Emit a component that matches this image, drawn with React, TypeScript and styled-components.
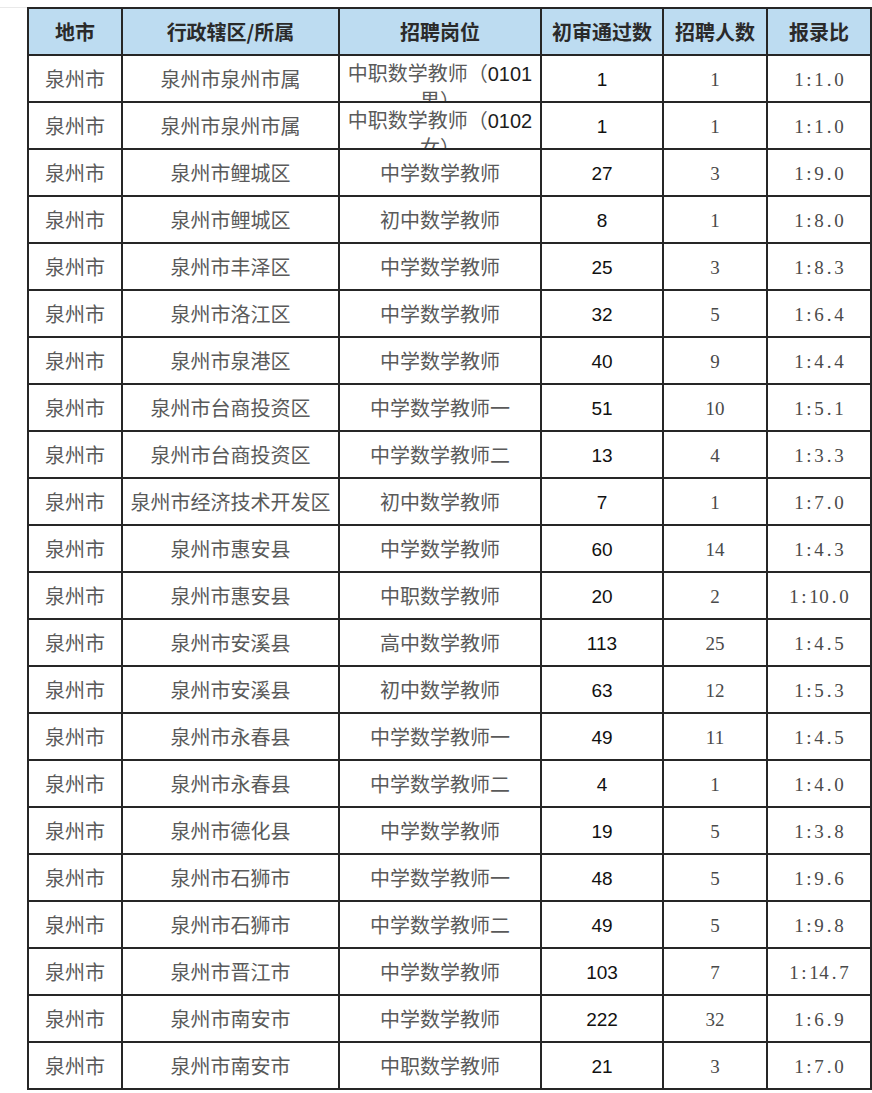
import React from "react";
import styled, { createGlobalStyle } from "styled-components";

const GlobalStyle = createGlobalStyle`
  html, body { margin: 0; padding: 0; background: #ffffff; }
  body { font-family: "Noto Sans CJK SC", "Liberation Sans", sans-serif; }
`;

const Page = styled.div`
  padding-top: 7px;
`;

const Frame = styled.div`
  border-top: 1px solid #e9e9e9;
  padding-left: 27px;
`;

const Table = styled.table`
  border-collapse: collapse;
  table-layout: fixed;
  width: 843px;
  margin-top: -1px;
`;

const HeadCell = styled.th`
  height: 47px;
  padding: 0;
  box-sizing: border-box;
  background: #bddcf1;
  border: 2px solid #262626;
  font-family: "Noto Sans CJK SC", sans-serif;
  font-weight: 700;
  font-size: 20px;
  color: #2a2a2a;
  text-align: center;
  vertical-align: middle;
  white-space: nowrap;
`;

const Cell = styled.td`
  height: 47px;
  padding: 0;
  box-sizing: border-box;
  border: 2px solid #262626;
  text-align: center;
  vertical-align: middle;
  background: #ffffff;
`;

const CjkText = styled.span`
  font-family: "Noto Sans CJK SC", sans-serif;
  font-size: 20px;
  color: #5a5a5a;
  white-space: nowrap;
`;

const WrapBox = styled.div`
  height: 45px;
  overflow: hidden;
  box-sizing: border-box;
  padding: 4px 6px 0;
  line-height: 26px;
  font-family: "Noto Sans CJK SC", sans-serif;
  font-size: 20px;
  color: #5a5a5a;
  text-align: center;
`;

const Code = styled.span`
  font-family: "Liberation Sans", sans-serif;
  color: #1c1c1c;
  font-size: 20px;
`;

const Passed = styled.span`
  font-family: "Liberation Sans", sans-serif;
  font-size: 19px;
  color: #111111;
`;

const Hired = styled.span`
  font-family: "Liberation Serif", serif;
  font-size: 19px;
  color: #4a4a4a;
`;

const Mono = styled.span`
  display: inline-flex;
  font-family: "Liberation Serif", serif;
  font-size: 19px;
  color: #4a4a4a;
`;

const MonoChar = styled.span`
  display: inline-block;
  width: 10px;
  text-align: center;
`;

type Row = {
  city: string;
  area: string;
  post: string;
  code?: string;
  tail?: string;
  passed: number;
  hired: number;
  ratio: string;
};

const rows: Row[] = [
  { city: "泉州市", area: "泉州市泉州市属", post: "中职数学教师（", code: "0101", tail: "男）", passed: 1, hired: 1, ratio: "1:1.0" },
  { city: "泉州市", area: "泉州市泉州市属", post: "中职数学教师（", code: "0102", tail: "女）", passed: 1, hired: 1, ratio: "1:1.0" },
  { city: "泉州市", area: "泉州市鲤城区", post: "中学数学教师", passed: 27, hired: 3, ratio: "1:9.0" },
  { city: "泉州市", area: "泉州市鲤城区", post: "初中数学教师", passed: 8, hired: 1, ratio: "1:8.0" },
  { city: "泉州市", area: "泉州市丰泽区", post: "中学数学教师", passed: 25, hired: 3, ratio: "1:8.3" },
  { city: "泉州市", area: "泉州市洛江区", post: "中学数学教师", passed: 32, hired: 5, ratio: "1:6.4" },
  { city: "泉州市", area: "泉州市泉港区", post: "中学数学教师", passed: 40, hired: 9, ratio: "1:4.4" },
  { city: "泉州市", area: "泉州市台商投资区", post: "中学数学教师一", passed: 51, hired: 10, ratio: "1:5.1" },
  { city: "泉州市", area: "泉州市台商投资区", post: "中学数学教师二", passed: 13, hired: 4, ratio: "1:3.3" },
  { city: "泉州市", area: "泉州市经济技术开发区", post: "初中数学教师", passed: 7, hired: 1, ratio: "1:7.0" },
  { city: "泉州市", area: "泉州市惠安县", post: "中学数学教师", passed: 60, hired: 14, ratio: "1:4.3" },
  { city: "泉州市", area: "泉州市惠安县", post: "中职数学教师", passed: 20, hired: 2, ratio: "1:10.0" },
  { city: "泉州市", area: "泉州市安溪县", post: "高中数学教师", passed: 113, hired: 25, ratio: "1:4.5" },
  { city: "泉州市", area: "泉州市安溪县", post: "初中数学教师", passed: 63, hired: 12, ratio: "1:5.3" },
  { city: "泉州市", area: "泉州市永春县", post: "中学数学教师一", passed: 49, hired: 11, ratio: "1:4.5" },
  { city: "泉州市", area: "泉州市永春县", post: "中学数学教师二", passed: 4, hired: 1, ratio: "1:4.0" },
  { city: "泉州市", area: "泉州市德化县", post: "中学数学教师", passed: 19, hired: 5, ratio: "1:3.8" },
  { city: "泉州市", area: "泉州市石狮市", post: "中学数学教师一", passed: 48, hired: 5, ratio: "1:9.6" },
  { city: "泉州市", area: "泉州市石狮市", post: "中学数学教师二", passed: 49, hired: 5, ratio: "1:9.8" },
  { city: "泉州市", area: "泉州市晋江市", post: "中学数学教师", passed: 103, hired: 7, ratio: "1:14.7" },
  { city: "泉州市", area: "泉州市南安市", post: "中学数学教师", passed: 222, hired: 32, ratio: "1:6.9" },
  { city: "泉州市", area: "泉州市南安市", post: "中职数学教师", passed: 21, hired: 3, ratio: "1:7.0" },
];

const widths = [94, 217, 202, 122, 104, 104];
const headers = ["地市", "行政辖区/所属", "招聘岗位", "初审通过数", "招聘人数", "报录比"];

const Ratio: React.FC<{ value: string }> = ({ value }) => (
  <Mono>
    {value.split("").map((c, i) => (
      <MonoChar key={i}>{c}</MonoChar>
    ))}
  </Mono>
);

export default function App() {
  return (
    <>
      <GlobalStyle />
      <Page>
        <Frame>
          <Table>
            <colgroup>
              {widths.map((w, i) => (
                <col key={i} style={{ width: w }} />
              ))}
            </colgroup>
            <thead>
              <tr>
                {headers.map((h) => (
                  <HeadCell key={h}>{h}</HeadCell>
                ))}
              </tr>
            </thead>
            <tbody>
              {rows.map((r, i) => (
                <tr key={i}>
                  <Cell>
                    <CjkText>{r.city}</CjkText>
                  </Cell>
                  <Cell>
                    <CjkText>{r.area}</CjkText>
                  </Cell>
                  <Cell>
                    {r.code ? (
                      <WrapBox>
                        {r.post}
                        <Code>{r.code}</Code>
                        {r.tail}
                      </WrapBox>
                    ) : (
                      <CjkText>{r.post}</CjkText>
                    )}
                  </Cell>
                  <Cell>
                    <Passed>{r.passed}</Passed>
                  </Cell>
                  <Cell>
                    <Hired>{r.hired}</Hired>
                  </Cell>
                  <Cell>
                    <Ratio value={r.ratio} />
                  </Cell>
                </tr>
              ))}
            </tbody>
          </Table>
        </Frame>
      </Page>
    </>
  );
}
